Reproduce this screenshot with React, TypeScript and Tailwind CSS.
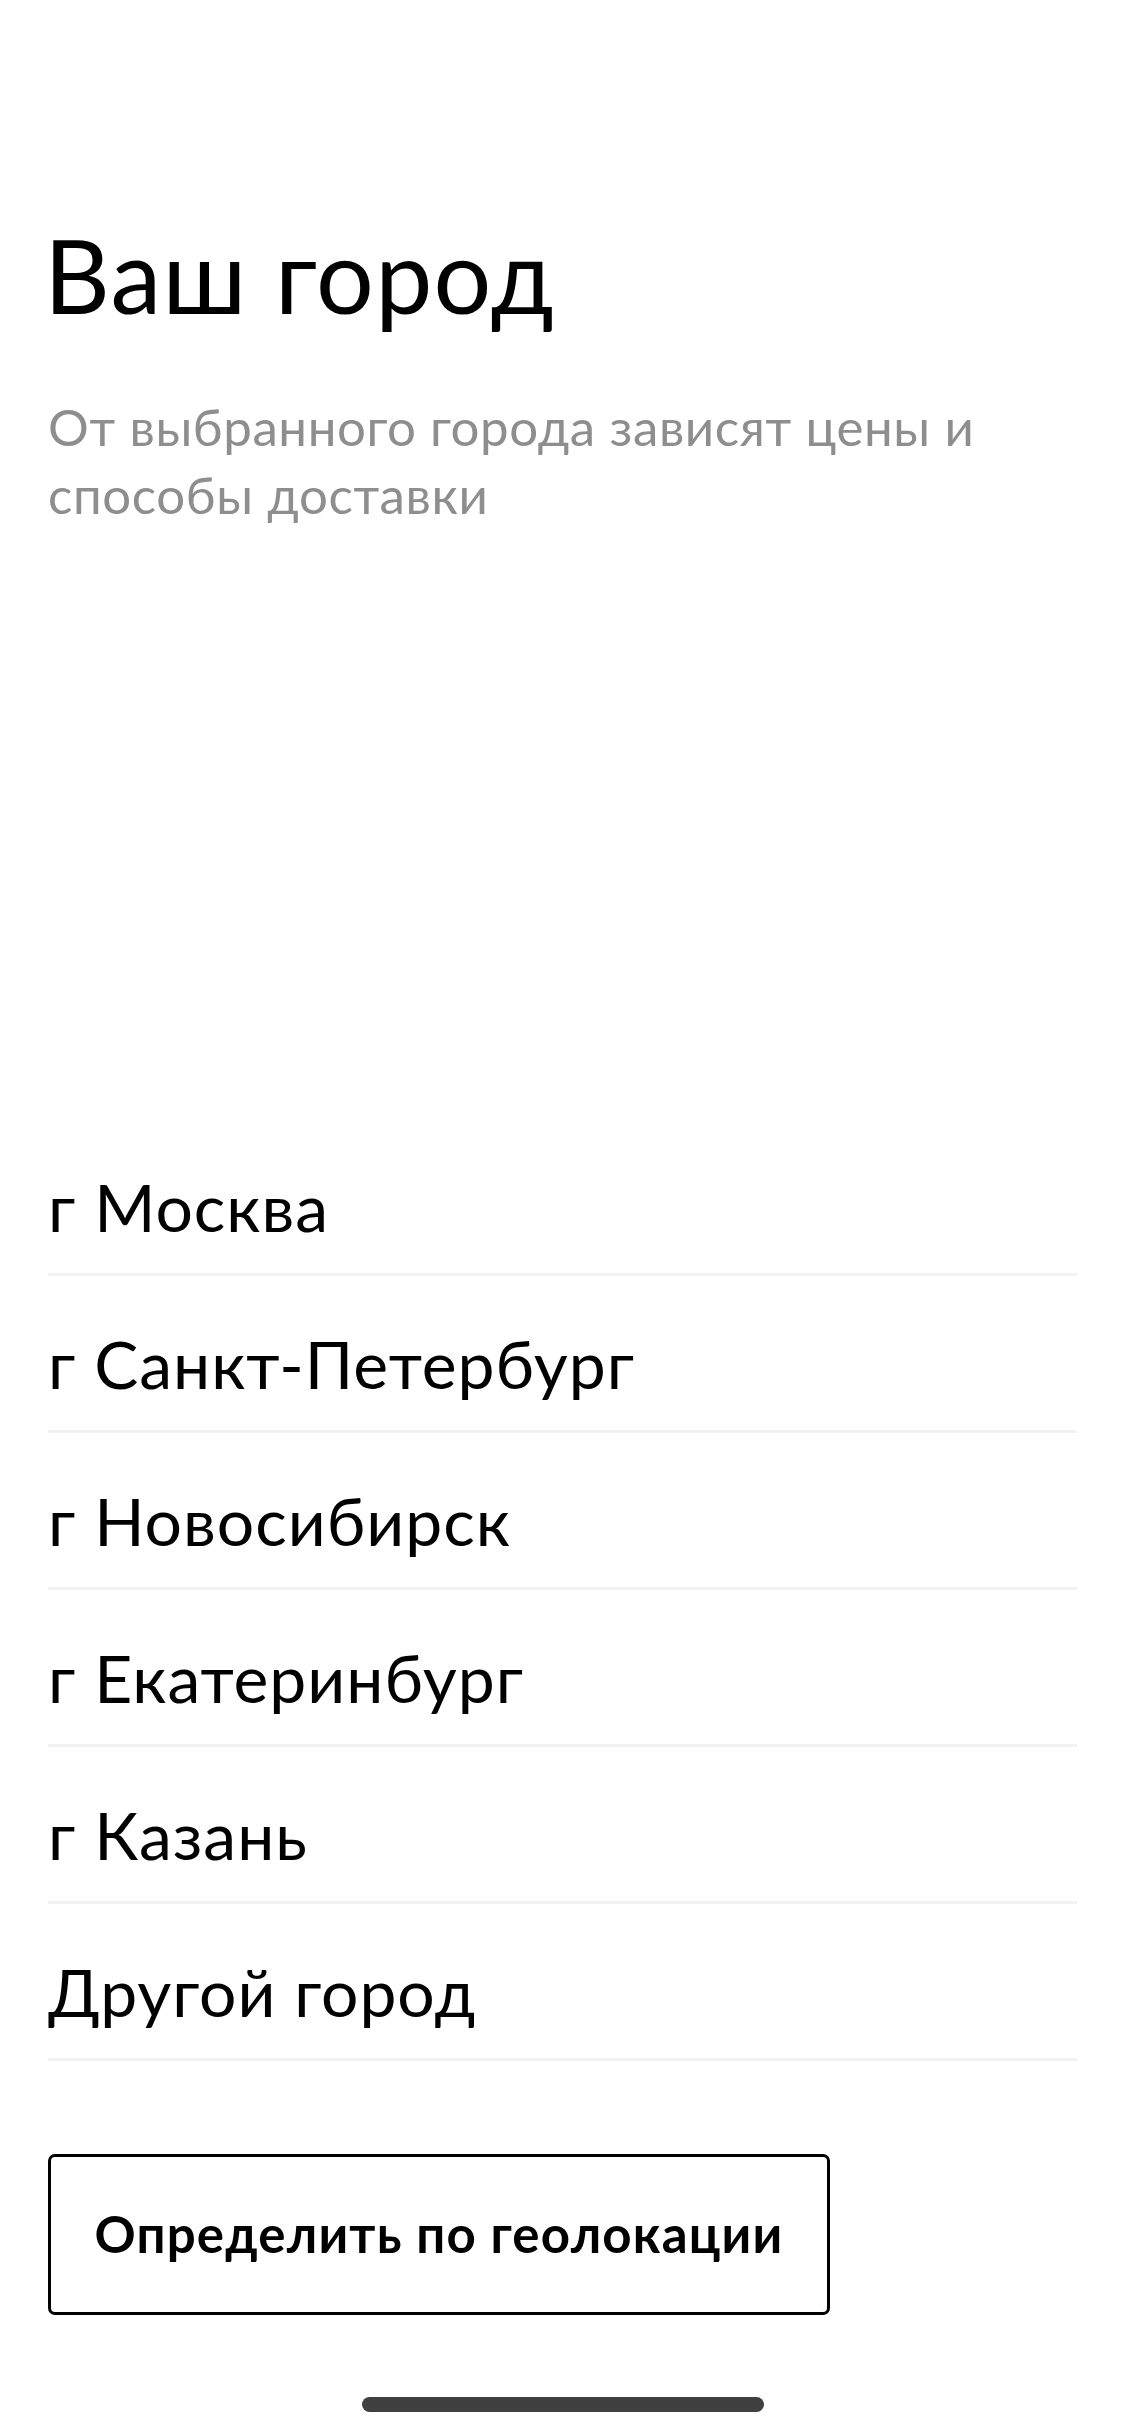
import React from "react";

const cities = [
  "г Москва",
  "г Санкт-Петербург",
  "г Новосибирск",
  "г Екатеринбург",
  "г Казань",
  "Другой город",
];

export default function App() {
  return (
    <div
      className="flex min-h-[2436px] w-[1125px] flex-col bg-white text-black"
      style={{ fontFamily: "Lato, 'Noto Sans', sans-serif" }}
    >
      <div className="px-12 pt-[214px]">
        <h1 className="ml-[-4px] text-[102px] font-normal leading-[122px] tracking-[1.3px]">
          Ваш город
        </h1>
        <p className="mt-[57px] text-[51px] leading-[68px] tracking-[0.6px] text-[#8e8e8e]">
          От выбранного города зависят цены и
          <br />
          способы доставки
        </p>
      </div>

      <ul className="mt-[590px] px-12">
        {cities.map((city) => (
          <li
            key={city}
            className="border-b-[3px] border-[#f2f2f4] pt-[48px] pb-[27px] text-[66px] leading-[79px] tracking-[1px]"
          >
            {city}
          </li>
        ))}
      </ul>

      <div className="px-12 pt-[93px]">
        <button
          type="button"
          className="flex h-[161px] w-[782px] items-center justify-center rounded-[7px] border-[3px] border-black bg-white text-[51px] font-bold tracking-[1.2px] text-black"
        >
          Определить по геолокации
        </button>
      </div>

      <div className="flex justify-center pt-[82px] pb-[22px]">
        <div className="h-[15px] w-[402px] rounded-full bg-[#404040]" />
      </div>
    </div>
  );
}
